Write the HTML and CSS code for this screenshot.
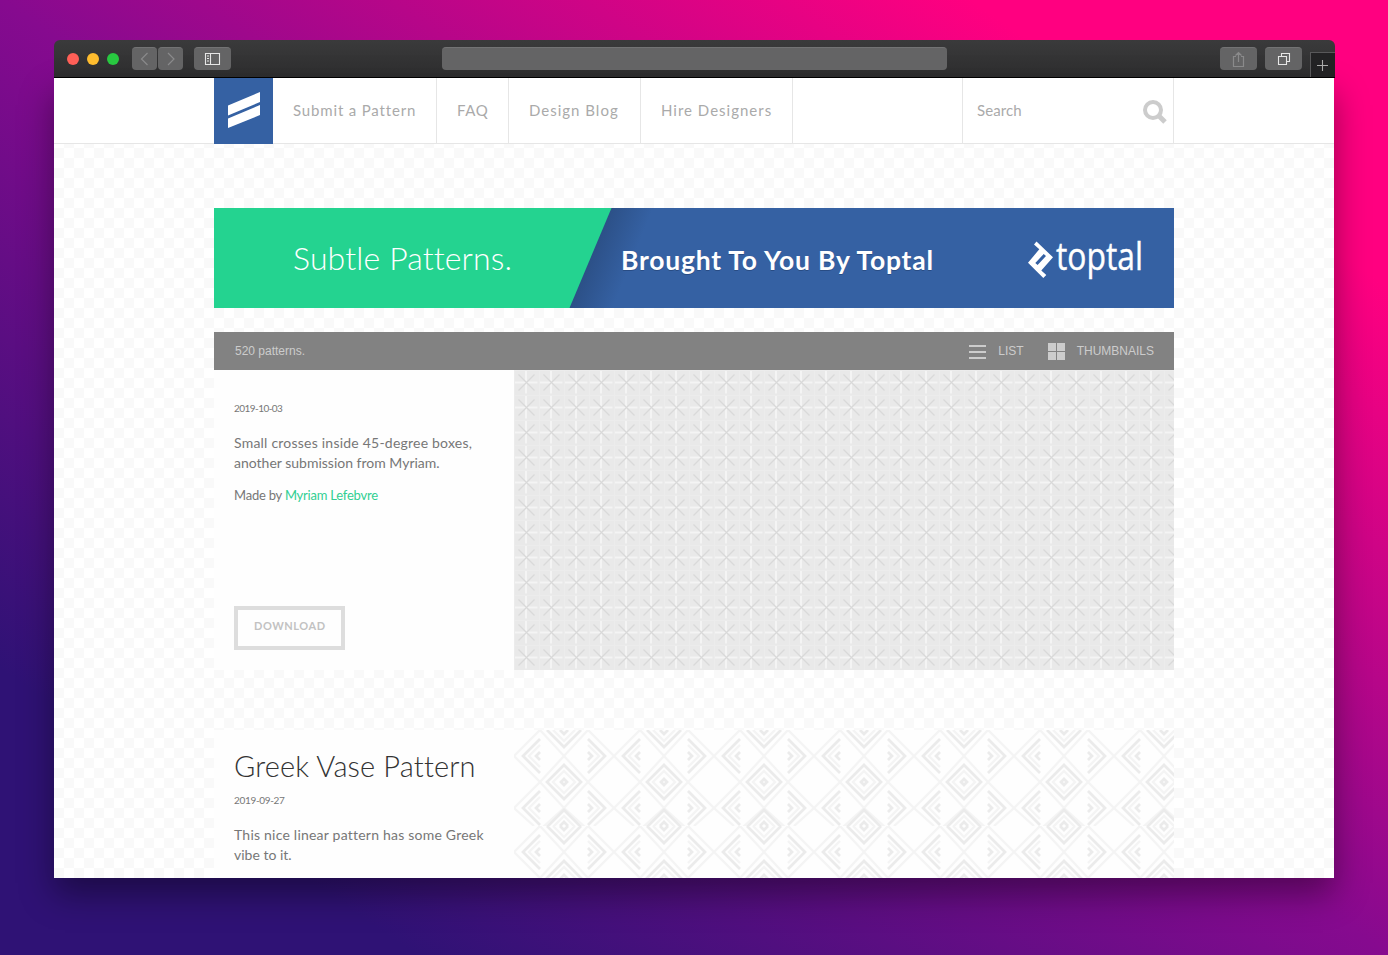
FILE: index.html
```
<!DOCTYPE html>
<html lang="en">
<head>
<meta charset="utf-8">
<title>Subtle Patterns</title>
<link rel="stylesheet" href="styles.css">
</head>
<body>
<div class="window">
  <div class="titlebar">
    <span class="light red"></span><span class="light yellow"></span><span class="light green"></span>
    <span class="tool back"><svg width="25" height="23" viewBox="0 0 25 23"><path d="M15.500 6l-6 6 6 6" class="dim"/></svg></span>
    <span class="tool forward"><svg width="25" height="23" viewBox="0 0 25 23"><path d="M10 6l6 6-6 6" class="dim"/></svg></span>
    <span class="tool wide side"><svg width="37" height="23" viewBox="0 0 37 23"><path d="M11.500 6.500h14v11h-14zM16.500 6.500v11M13 9h2M13 11.500h2M13 14h2" class="bright"/></svg></span>
    <span class="address"></span>
    <span class="tool wide share"><svg width="37" height="23" viewBox="0 0 37 23"><path d="M16 9.500h-2.500v10h10v-10H21M18.500 15V6M15.500 8.500l3-3 3 3" class="dim"/></svg></span>
    <span class="tool wide"><svg width="37" height="23" viewBox="0 0 37 23"><path d="M13.500 9.500h8v8h-8zM16.500 9V6.500h8v8H22" class="bright"/></svg></span>
    <span class="newtab"><svg width="24" height="24" viewBox="0 0 24 24"><path d="M6 12.500h11M11.500 7v11" class="plus"/></svg></span>
  </div>
  <div class="page">
    <header class="header">
      <div class="container nav">
        <a class="logo"><svg width="59" height="66" viewBox="0 0 59 66"><path d="M14 27.500L46 14v10L14 37.500zM14 40.500L46 27v10L14 50z" fill="#fff"/></svg></a>
        <a class="item n1">Submit a Pattern</a>
        <a class="item n2">FAQ</a>
        <a class="item n3">Design Blog</a>
        <a class="item n4">Hire Designers</a>
        <div class="search"><span>Search</span><svg width="26" height="26" viewBox="0 0 26 26"><circle cx="11" cy="11" r="8" fill="none" stroke="#ccc" stroke-width="4"/><path d="M16.500 16.500l6.500 6.500" stroke="#ccc" stroke-width="5" fill="none"/></svg></div>
      </div>
    </header>
    <main class="container">
      <svg class="banner" width="960" height="100" viewBox="0 0 960 100">
        <defs><linearGradient id="fade" gradientUnits="userSpaceOnUse" x1="376" y1="50" x2="413" y2="65"><stop offset="0" stop-color="#2c5087"/><stop offset="1" stop-color="#3561a3"/></linearGradient></defs>
        <path d="M0 0h960v100H0z" fill="url(#fade)"/>
        <path d="M0 0h397.500L355.500 100H0z" fill="#24d390"/>
        <text x="79" y="61.500" class="brand" textLength="219">Subtle Patterns.</text>
        <text x="407" y="62.500" class="sponsor shade" textLength="312">Brought To You By Toptal</text>
        <text x="407" y="61.500" class="sponsor" textLength="312">Brought To You By Toptal</text>
        <path d="M822.500 33.500l-2.500 3 5.300 4.800L814 54.700l15.300 15.300 3-3-5-4.500L839 49.300zM821.300 55l8.400-9 2.300 2-8.400 9z" fill="#fff" fill-rule="evenodd"/>
        <text x="842" y="61.700" class="wordmark" textLength="87" lengthAdjust="spacingAndGlyphs">toptal</text>
      </svg>
      <div class="bar">
        <span class="count">520 patterns.</span>
        <svg width="17" height="14" viewBox="0 0 17 14"><path d="M0 0h17v2H0zM0 6h17v2H0zM0 12h17v2H0z" fill="#ccc"/></svg>
        <span class="list">LIST</span>
        <svg width="17" height="17" viewBox="0 0 17 17"><path d="M0 0h8v8H0zM9 0h8v8H9zM0 9h8v8H0zM9 9h8v8H9z" fill="#ccc"/></svg>
        <span class="thumbs">THUMBNAILS</span>
      </div>
      <article class="card">
        <div class="info first">
          <time class="date tight">2019-10-03</time>
          <p class="desc"><span class="loose">Small crosses inside 45-degree boxes,</span><br>another submission from Myriam.</p>
          <p class="by">Made by <a>Myriam Lefebvre</a></p>
          <a class="download">DOWNLOAD</a>
        </div>
        <svg width="660" height="300"><defs><pattern id="crosses" width="25" height="25" patternUnits="userSpaceOnUse"><path d="M0 0h25v25H0z" fill="#e9e9e9"/><path d="M0 0h25M0 0v25" stroke="#ececec" stroke-width="2"/><path d="M1 12.500h22.500M12 1v22.500" stroke="#f4f4f4" stroke-width="2"/><path d="M4.500 4.500l16 16M20.500 4.500l-16 16" stroke="#d9d9d9" stroke-width="1.200"/></pattern></defs><rect width="660" height="300" fill="url(#crosses)"/></svg>
      </article>
      <article class="card second">
        <div class="info">
          <h2 class="title">Greek Vase Pattern</h2>
          <time class="date">2019-09-27</time>
          <p class="desc"><span class="loose">This nice linear pattern has some Greek</span><br>vibe to it.</p>
        </div>
        <svg width="660" height="300"><defs><pattern id="greek" width="100" height="96" patternUnits="userSpaceOnUse"><path d="M0 0h100v96H0z" fill="#fefefe"/>
          <g fill="none" stroke="#f4f4f4" stroke-width="2.200"><path d="M26 0L0 26l26 26L0 78l20 18M74 0l26 26-26 26 26 26-20 18M26 0l24 26L74 0M50 26L26 52l24 26 24-26zM50 78L28 98M50 78l22 20"/><path d="M26 15L15 26l11 11M26 67L15 78l11 11M74 15l11 11-11 11M74 67l11 11-11 11M39 0l11 11L61 0M50 41L39 52l11 11 11-11zM39 97l11-11 11 11"/></g>
          <g fill="none" stroke="#ebebeb" stroke-width="2.700"><path d="M26 9L9 26l17 17M26 61L9 78l17 17M74 9l17 17-17 17M74 61l17 17-17 17M33 0l17 17L67 0M50 35L33 52l17 17 17-17zM33 97l17-17 17 17"/><path d="M26 22l-4 4 4 4M26 74l-4 4 4 4M74 22l4 4-4 4M74 74l4 4-4 4M46 0l4 4 4-4M50 49l-3 3 3 3 3-3zM46 96l4-4 4 4"/></g></pattern></defs><rect width="660" height="300" fill="url(#greek)"/></svg>
      </article>
    </main>
  </div>
</div>
</body>
</html>
```
FILE: styles.css
```
* { box-sizing: border-box; }
body {
  margin: 0;
  height: 955px;
  padding: 40px 53px 0 54px;
  overflow: hidden;
  font-family: Lato, "Open Sans", sans-serif;
  font-variant-ligatures: none;
  background: linear-gradient(to top right, #2f1275 15%, #860a8f 50%, #ff0080 85%);
}
svg { display: block; flex: none; }
p, h2 { margin: 0; font-weight: 400; }
.window { width: 1281px; height: 838px; }
.titlebar {
  height: 38px;
  display: flex;
  align-items: center;
  padding-left: 13px;
  border-radius: 6px 6px 0 0;
  border-bottom: 1px solid #000;
  background: linear-gradient(#3a3a3b, #2e2e2f);
  overflow: hidden;
}
.light { width: 12px; height: 12px; border-radius: 50%; margin-right: 8px; }
.red { background: #ff5f57; }
.yellow { background: #febc2e; }
.green { background: #28c840; }
.tool { width: 25px; height: 23px; border-radius: 4px; background: #646465; border-top: 1px solid #737374; }
.tool svg { margin-top: -1px; }
.wide { width: 37px; }
.back { margin-left: 5px; margin-right: 1px; }
.side { margin-left: 11px; }
.address { width: 505px; height: 23px; margin: 0 273px 0 211px; border-radius: 4px; background: #646465; border-top: 1px solid #737374; }
.share { margin-right: 8px; }
.newtab { margin-left: 8px; width: 25px; height: 25px; align-self: flex-end; background: #222224; border: solid #58585a; border-width: 1px 0 0 1px; }
.dim { fill: none; stroke: #8a8a8b; stroke-width: 1.2; }
.bright { fill: none; stroke: #e6e6e6; stroke-width: 1.1; }
.plus { fill: none; stroke: #aaa; stroke-width: 1.1; }
.page {
  width: 1280px;
  height: 800px;
  overflow: hidden;
  background: repeating-conic-gradient(#fff 0 25%, #f9f9f9 0 50%) 10px 0 / 20px 20px;
  box-shadow: 0 16px 32px rgba(0, 0, 0, .4);
}
.container { width: 960px; margin: 0 auto; }
.header { height: 66px; background: #fff; border-bottom: 1px solid #e6e6e6; }
.nav { display: flex; height: 65px; font-size: 15px; line-height: 65px; color: #aaa; letter-spacing: 1px; }
.logo { width: 59px; height: 66px; background: #3561a3; }
.item { height: 65px; padding-left: 20px; border-right: 1px solid #e6e6e6; white-space: nowrap; }
.n1 { width: 164px; letter-spacing: .84px; }
.n2 { width: 72px; letter-spacing: .6px; }
.n3 { width: 132px; }
.n4 { width: 152px; }
.search { margin-left: auto; width: 212px; height: 65px; padding: 0 5px 0 14px; border: solid #e6e6e6; border-width: 0 1px; display: flex; justify-content: space-between; letter-spacing: .1px; }
.search svg { margin-top: 21px; }
.banner { margin-top: 64px; }
.brand { font: 300 32px Lato, sans-serif; fill: #fff; font-variant-ligatures: none; }
.sponsor { font: 700 26.500px Lato, sans-serif; fill: #fff; }
.shade { fill: #284c84; }
.wordmark { font: 400 38px "Open Sans", sans-serif; fill: #fff; stroke: #fff; stroke-width: .4; }
.bar { margin-top: 24px; height: 38px; padding: 0 20px 0 21px; display: flex; align-items: center; background: #828282; color: #ccc; font: 12px "Liberation Sans", sans-serif; }
.bar svg { margin-top: 1px; }
.count { margin-right: auto; }
.list { margin: 0 24px 0 12px; }
.thumbs { margin-left: 12px; }
.card { display: flex; height: 300px; }
.second { margin-top: 60px; }
.info { width: 300px; padding: 19px 0 0 20px; background: #fefefe; color: #777; }
.first { padding-top: 31px; }
.date { display: block; font-size: 10px; line-height: 14px; letter-spacing: -.33px; }
.tight { letter-spacing: -.55px; }
.desc { margin-top: 18px; font-size: 14px; line-height: 20px; white-space: nowrap; }
.loose { letter-spacing: .22px; }
.by { margin-top: 12px; font-size: 13px; line-height: 20px; letter-spacing: -.22px; }
.by a { color: #30cf92; }
.download { display: block; width: 111px; height: 44px; margin-top: 101px; border: 4px solid #ddd; padding-left: 16px; line-height: 32px; font-size: 11px; font-weight: 700; letter-spacing: .55px; color: #c2c2c2; }
.title { font-size: 29px; font-weight: 300; line-height: 34px; letter-spacing: .15px; color: #333; white-space: nowrap; }
.title + .date { margin-top: 10px; }
```
